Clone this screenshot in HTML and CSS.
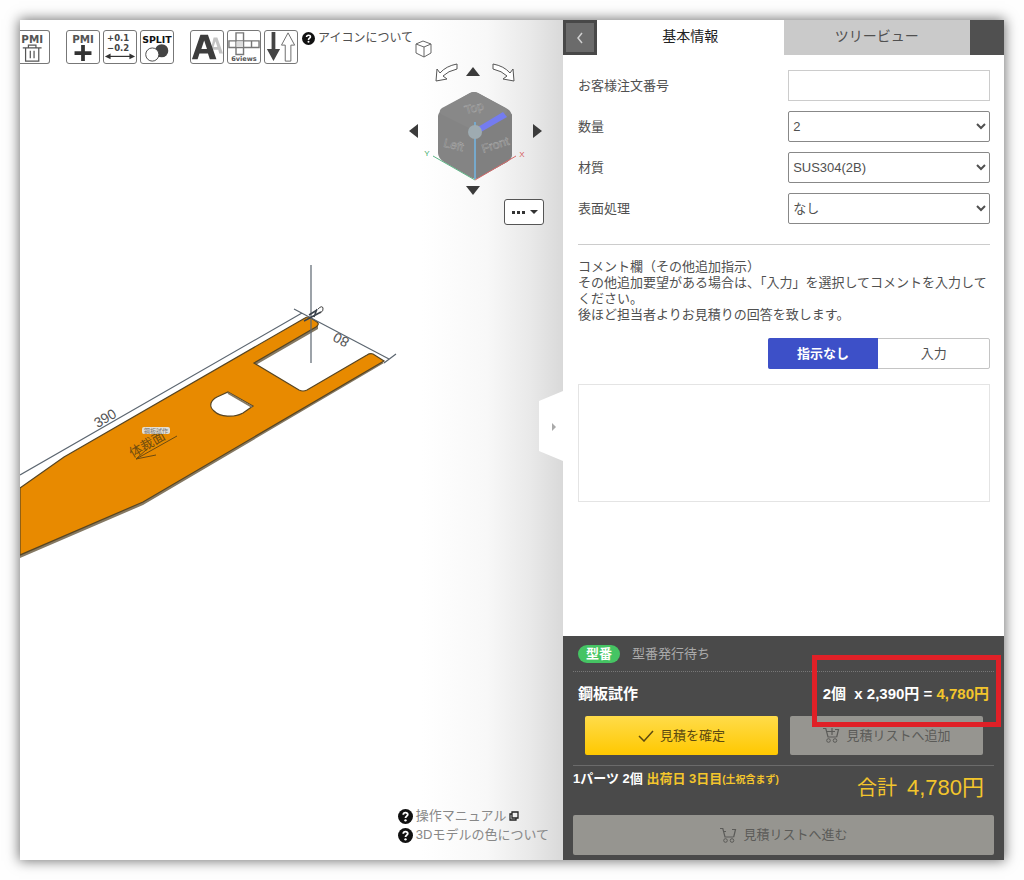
FILE: index.html
```html
<!DOCTYPE html>
<html lang="ja">
<head>
<meta charset="utf-8">
<meta name="viewport" content="width=device-width, initial-scale=1">
<title>見積</title>
<link rel="stylesheet" href="styles.css">
</head>
<body>
<svg width="0" height="0" class="defs" aria-hidden="true">
  <symbol id="cart" viewBox="0 0 18 17">
    <path d="M1 1.500h2.800l2.200 8.500h8.500M5 4.500h2M13 2.500h3.500l-1.800 7.500" fill="none" stroke="currentColor" stroke-width="1.200"/>
    <circle cx="6.500" cy="13.500" r="1.800" fill="none" stroke="currentColor"/>
    <circle cx="13" cy="13.500" r="1.800" fill="none" stroke="currentColor"/>
  </symbol>
  <symbol id="help" viewBox="0 0 14 14">
    <circle cx="7" cy="7" r="7" fill="#111"/>
    <path d="M4.900 5.400C5 2.700 9.300 2.900 9.100 5.300 9 6.700 7 6.700 7 8.500" fill="none" stroke="#fff" stroke-width="1.700"/>
    <circle cx="7" cy="10.600" r="1.100" fill="#fff"/>
  </symbol>
</svg>
<main class="app">
  <section class="viewer" aria-label="3Dビュー">
    <svg class="model" width="543" height="840" viewBox="20 20 543 840" aria-hidden="true">
      <path d="M20 490 64 459 308 319 318 325V329L254 366 303 393 370 356 384 363 143 505 20 558Z" fill="#857963"/>
      <path d="M20 488 64 457 305 318Q308 316 311 318L317 322Q320 324 316 327L254 363 299 390Q303 392 307 390L367 355Q370 353 373 354L384 361 143 502 20 555Z" fill="#e88a00" stroke="#574522" stroke-width="1.200"/>
      <path d="M228 392 253 406 243 413C234 418 220 417 214 411 208 406 211 400 217 397Z" fill="#fff" stroke="#574522" stroke-width="1.200"/>
      <path d="M228 393 252 407" stroke="#857963" stroke-width="2"/>
      <path d="M20 475 302 313M294 309 389 359M384 363 396 354M311 265V363" fill="none" stroke="#5c6670" stroke-width="1.200"/>
      <path d="M304 321 321 312M309 315l8-5M314 317l3-8" stroke="#39424c" stroke-width="1.500" fill="none"/>
      <path d="M318 309q4-4 5-1t-3 5" stroke="#444" fill="none"/>
      <text x="105" y="423" transform="rotate(-30 105 418)" class="dim">390</text>
      <text x="341" y="345" transform="rotate(208 341 340)" class="dim">80</text>
      <text x="147" y="449" transform="rotate(-30 147 444)" class="engrave">体裁面</text>
      <path d="M177 436 136 459 147 449M136 459 156 455" stroke="#6a4a12" fill="none"/>
      <rect x="142" y="427" width="28" height="7" rx="2" fill="#e3ded3"/>
      <text x="156" y="433" class="tag">鋼板試作</text>
    </svg>

    <div class="toolbar">
      <button type="button" class="tool first" aria-label="PMI削除"><svg viewBox="0 0 34 34"><text x="14" y="13" class="pmi">PMI</text><path d="M4 18h20M10 18v-3h8v3M7 18v14h14V18M12 21v8M16 21v8" fill="none" stroke="#555" stroke-width="1.300"/></svg></button>
      <button type="button" class="tool gap" aria-label="PMI追加"><svg viewBox="0 0 34 34"><text x="17" y="13" class="pmi">PMI</text><path d="M17 15v17M8 23.500h18" stroke="#333" stroke-width="4"/></svg></button>
      <button type="button" class="tool" aria-label="公差"><svg viewBox="0 0 34 34"><text x="15" y="11" class="tol">+0.1</text><text x="15" y="21" class="tol">−0.2</text><path d="M4 27h26" stroke="#333" stroke-width="1.300"/><path d="M1 27l6-3v6zM33 27l-6-3v6z" fill="#333"/></svg></button>
      <button type="button" class="tool" aria-label="分割"><svg viewBox="0 0 34 34"><text x="17" y="13" class="split">SPLIT</text><circle cx="22" cy="21" r="7" fill="#444"/><circle cx="12" cy="25" r="7" fill="#fff" stroke="#444"/></svg></button>
      <button type="button" class="tool gap" aria-label="文字サイズ"><svg viewBox="0 0 34 34"><path fill-rule="evenodd" d="M24 7h4l6 17h-4l-1-4h-6l-1 4h-2zM26 11l-2 6h4z" fill="#c4c4c4"/><path fill-rule="evenodd" d="M10 4h8l9 26h-7l-2-6h-9l-2 6H1zM14 10l-3 9h6z" fill="#3d3d3d"/></svg></button>
      <button type="button" class="tool" aria-label="6面図"><svg viewBox="0 0 34 34"><path d="M1 10.500h32v7H1zM8.500 2h8v23h-8zM8.500 10.500v7M16.500 10.500v7M25 10.500v7" fill="none" stroke="#777" stroke-width="1.500"/><path d="M9 11h7v6H9z" fill="#ddd"/><text x="17" y="32" class="views">6views</text></svg></button>
      <button type="button" class="tool" aria-label="反転"><svg viewBox="0 0 34 34"><path d="M7 1h4v18h5L9 32 2 19h5z" fill="#444"/><path d="M24.500 2l7 13h-4v17h-6V15h-4z" fill="#fff" stroke="#666"/></svg></button>
      <a href="#" class="help-link"><svg width="13" height="13"><use href="#help"/></svg>アイコンについて</a>
    </div>

    <div class="navigator">
      <svg class="cube" width="133" height="170" viewBox="409 30 133 170" aria-hidden="true">
        <path d="M423 41l8 3v9l-7 4-8-4v-9zM416 44l8 3 7-3M424 47v10" fill="none" stroke="#666"/>
        <path d="M470 93q4-2 8 0l28 15q6 3 6 9v37q0 5-5 8l-27 15q-5 3-10 0l-26-15q-6-4-6-9v-37q1-5 6-8z" fill="#848484"/>
        <path d="M470 93q4-2 8 0l27 15q4 3 1 5l-31 18-34-17q-3-3 1-6z" fill="#888"/>
        <path d="M476 132 512 114v40q0 5-5 8l-31 17z" fill="#808080"/>
        <path d="M478 127 503 112 507 117 481 132z" fill="#747cf0"/>
        <path d="M475 180 516 156" stroke="#d66a6a"/><path d="M475 180 433 156" stroke="#5db586"/>
        <path d="M475 122v57" stroke="#76a9cc" stroke-width="2"/>
        <circle cx="475" cy="132" r="7" fill="#9eabb1"/>
        <text class="face" x="474" y="112" transform="rotate(-15 474 108)">Top</text>
        <text class="face" x="454" y="149" transform="rotate(14 454 144)">Left</text>
        <text class="face" x="495" y="149" transform="rotate(-18 495 144)">Front</text>
        <text class="axis" x="522" y="157" fill="#d65a5a">X</text><text class="axis" x="427" y="156" fill="#42ad6d">Y</text>
      </svg>
      <button type="button" class="nav ccw" aria-label="左回転"><svg width="24" height="20"><path d="M23 2v5q-9 2-14 7l4 3-11 2 1-12 3 4Q12 4 23 2z" fill="#fff" stroke="#555"/></svg></button>
      <button type="button" class="nav up" aria-label="上"><svg width="14" height="9"><path d="M0 9 7 0l7 9z" fill="#3b3b3b"/></svg></button>
      <button type="button" class="nav cw" aria-label="右回転"><svg width="24" height="20"><path d="M1 2v5q9 2 14 7l-4 3 11 2-1-12-3 4Q12 4 1 2z" fill="#fff" stroke="#555"/></svg></button>
      <button type="button" class="nav left" aria-label="左"><svg width="9" height="14"><path d="M9 0 0 7l9 7z" fill="#3b3b3b"/></svg></button>
      <button type="button" class="nav right" aria-label="右"><svg width="9" height="14"><path d="M0 0 9 7l-9 7z" fill="#3b3b3b"/></svg></button>
      <button type="button" class="nav down" aria-label="下"><svg width="14" height="9"><path d="M0 0h14L7 9z" fill="#3b3b3b"/></svg></button>
    </div>
    <button type="button" class="more" aria-label="その他"><svg width="28" height="8"><path d="M2 3h3v3H2zM7 3h3v3H7zM12 3h3v3h-3z" fill="#333"/><path d="M20 2h8l-4 4z" fill="#333"/></svg></button>

    <button type="button" class="handle" aria-label="パネルを閉じる"><svg width="24" height="70"><path d="M24 0 0 10v50l24 10z" fill="#fff"/><path d="M13 32l4 4-4 4z" fill="#aaa"/></svg></button>

    <nav class="links">
      <a href="#"><svg width="15" height="15"><use href="#help"/></svg>操作マニュアル<svg width="10" height="10"><path d="M3 1h6v6H3zM3 3H1v6h6V7" fill="none" stroke="#222" stroke-width="1.300"/></svg></a>
      <a href="#"><svg width="15" height="15"><use href="#help"/></svg>3Dモデルの色について</a>
    </nav>
  </section>

  <section class="panel">
    <header class="tabs">
      <button type="button" class="back" aria-label="戻る"><svg width="8" height="12"><path d="M6 1 2 6l4 5" fill="none" stroke="#d0d0d0" stroke-width="1.500"/></svg></button>
      <button type="button" class="tab active">基本情報</button>
      <button type="button" class="tab">ツリービュー</button>
    </header>

    <form class="form">
      <div class="row"><label for="order">お客様注文番号</label><input id="order" type="text"></div>
      <div class="row"><label for="qty">数量</label><select id="qty"><option>2</option></select></div>
      <div class="row"><label for="material">材質</label><select id="material"><option>SUS304(2B)</option></select></div>
      <div class="row"><label for="finish">表面処理</label><select id="finish"><option>なし</option></select></div>
      <hr>
      <label class="note" for="comment">コメント欄（その他追加指示）<br>その他追加要望がある場合は、「入力」を選択してコメントを入力してください。<br>後ほど担当者よりお見積りの回答を致します。</label>
      <div class="toggle"><button type="button" class="on">指示なし</button><button type="button">入力</button></div>
      <textarea id="comment"></textarea>
    </form>

    <footer class="summary">
      <div class="model-no"><span class="badge">型番</span><span>型番発行待ち</span></div>
      <div class="item"><span>鋼板試作</span><span class="price">2個&nbsp; x 2,390円 = <em>4,780円</em></span></div>
      <div class="actions">
        <button type="button" class="confirm"><svg width="16" height="12"><path d="M1 6l5 5 9-10" fill="none" stroke="currentColor" stroke-width="1.500"/></svg>見積を確定</button>
        <button type="button" class="muted"><svg width="18" height="17"><use href="#cart"/><path d="M10 1v7M7 4.500h6" stroke="currentColor" stroke-width="1.200"/></svg>見積リストへ追加</button>
      </div>
      <div class="total"><span class="ship">1パーツ 2個 <em>出荷日 3日目<small>(土祝含まず)</small></em></span><span class="sum">合計<span class="amount">4,780円</span></span></div>
      <button type="button" class="muted proceed"><svg width="18" height="17"><use href="#cart"/></svg>見積リストへ進む</button>
    </footer>
  </section>
</main>
</body>
</html>
```
FILE: styles.css
```css
*, *::after { box-sizing: border-box; }
body {
  margin: 0;
  padding: 20px;
  background: #fefefe;
  color: #505050;
  font: 13px/16px "Liberation Sans", "Noto Sans CJK JP", sans-serif;
}
button, input, select, textarea { font: inherit; color: inherit; }
button { padding: 0; border: 0; background: none; cursor: pointer; }
a { color: inherit; text-decoration: none; }
svg { flex: none; }
.defs { position: absolute; }

.app {
  display: flex;
  min-height: calc(100vh - 40px);
  background: #fff;
  box-shadow: 0 0 12px 1px rgba(0, 0, 0, .55);
}

.viewer {
  position: relative;
  flex: 1;
  min-width: 0;
  display: flex;
  flex-direction: column;
  justify-content: space-between;
  overflow: hidden;
  background: linear-gradient(90deg, #fff 74%, #f8f8f8 86%, #e9e9e9 94%, #d9d9d9);
}
.model { position: absolute; left: 0; top: 0; }
.dim { font-size: 14px; fill: #555; text-anchor: middle; }
.engrave { font-size: 13px; fill: #704d10; text-anchor: middle; }
.tag { font-size: 6px; fill: #777; text-anchor: middle; }

.toolbar { position: relative; display: flex; gap: 4px; padding-top: 10px; }
.tool {
  flex: none;
  width: 34px;
  height: 34px;
  border: 1px solid #777;
  border-radius: 3px;
  background: #fff;
  font-family: "DejaVu Sans", sans-serif;
}
.tool svg { display: block; width: 32px; height: 32px; }
.tool.first { width: 31px; margin-left: -1px; border-left: 0; border-radius: 0 3px 3px 0; }
.tool.gap { margin-left: 12px; }
.tool + .tool:not(.gap) { margin-left: -1px; }
.pmi { font-size: 11px; font-weight: bold; fill: #555; text-anchor: middle; }
.tol { font-size: 9px; font-weight: bold; fill: #444; text-anchor: middle; }
.split { font-size: 10px; font-weight: bold; fill: #111; text-anchor: middle; }
.views { font-size: 7px; font-weight: bold; fill: #555; text-anchor: middle; }
.help-link { display: flex; gap: 3px; height: 16px; align-items: center; font-size: 12px; white-space: nowrap; }

.navigator { position: absolute; top: 10px; right: 21px; width: 133px; height: 170px; }
.cube { position: absolute; left: 0; top: 0; }
.face { font-size: 12px; fill: #777; stroke: #aaa; stroke-width: .5px; text-anchor: middle; }
.axis { font-size: 8px; text-anchor: middle; }
.nav { position: absolute; display: flex; }
.ccw { left: 25px; top: 32px; }
.up { left: 57px; top: 37px; }
.cw { left: 83px; top: 32px; }
.left { left: 0; top: 94px; }
.right { right: 0; top: 94px; }
.down { left: 57px; top: 156px; }
.more {
  position: absolute;
  right: 19px;
  top: 179px;
  display: flex;
  align-items: center;
  justify-content: center;
  width: 40px;
  height: 26px;
  border: 1px solid #555;
  border-radius: 3px;
  background: #fff;
}
.handle { position: absolute; right: 0; top: 371px; display: flex; }

.links { position: relative; align-self: flex-end; display: grid; gap: 3px; padding: 0 14px 17px 0; color: #888; }
.links a { display: flex; align-items: center; gap: 3px; }

.panel { display: flex; flex-direction: column; width: 45%; max-width: 441px; background: #fff; }
.tabs { display: flex; height: 35px; padding-right: 34px; background: #505050; }
.back { display: flex; align-items: center; justify-content: center; width: 34px; border: 3px solid #484848; background: #6b6b6b; }
.tab { flex: 1; padding-bottom: 3px; background: #cacaca; font-size: 14px; }
.tab.active { background: #fff; color: #222; }

.form { flex: 1; display: flex; flex-direction: column; padding: 15px 14px 15px 15px; }
.row { display: flex; align-items: center; justify-content: space-between; margin-bottom: 10px; }
.row input, .row select { width: 49%; height: 31px; border: 1px solid #888; border-radius: 2px; background: #fff; }
.row input { border-color: #ccc; border-radius: 0; padding: 0 5px; }
.form hr { width: 100%; margin: 10px 0 14px; border: 0; border-top: 1px solid #ccc; }
.toggle { display: flex; align-self: flex-end; width: 54%; height: 31px; margin: 15px 0; border: 1px solid #c4c4c4; border-radius: 2px; }
.toggle button { flex: 1; }
.toggle .on { margin: -1px 0 -1px -1px; border-radius: 2px 0 0 2px; background: #3d50c8; color: #fff; font-weight: bold; }
.form textarea { width: 100%; height: 118px; border: 1px solid #e4e4e4; background: #fff; resize: none; }

.summary { padding: 0 10px 5px; background: #4a4a4a; color: #fff; }
.model-no { display: flex; align-items: center; gap: 12px; height: 36px; padding-left: 5px; border-bottom: 1px dotted #777; color: #aaa; }
.badge { padding: 1px 8px; border-radius: 9px; background: #45c463; color: #fff; font-weight: bold; }
.item { position: relative; display: flex; align-items: center; justify-content: space-between; height: 44px; padding: 0 5px; font-size: 15px; font-weight: bold; }
.price { font-size: 15px; font-weight: bold; }
.price::after { content: ""; position: absolute; z-index: 1; right: -7px; top: -17px; width: 189px; height: 72px; border: 5px solid #e02027; pointer-events: none; }
em { font-style: normal; color: #f3c52c; }
.actions { display: flex; gap: 12px; padding: 0 11px 10px 12px; border-bottom: 1px solid #6b6b6b; }
.actions button { flex: 1; }
.confirm, .muted { display: flex; align-items: center; justify-content: center; gap: 6px; height: 39px; border-radius: 2px; }
.confirm { background: linear-gradient(#ffdc4a, #ffc800); color: #5c4a10; }
.muted { background: #969590; color: #5b5b58; }
.total { display: flex; justify-content: space-between; height: 49px; padding-right: 10px; }
.ship { padding-top: 5px; font-weight: bold; }
.ship small { font-size: 10px; }
.sum { display: flex; align-items: center; gap: 10px; height: 44px; color: #f3c52c; font-size: 20px; }
.amount { font-size: 22px; }
.proceed { width: 100%; height: 40px; }
```
